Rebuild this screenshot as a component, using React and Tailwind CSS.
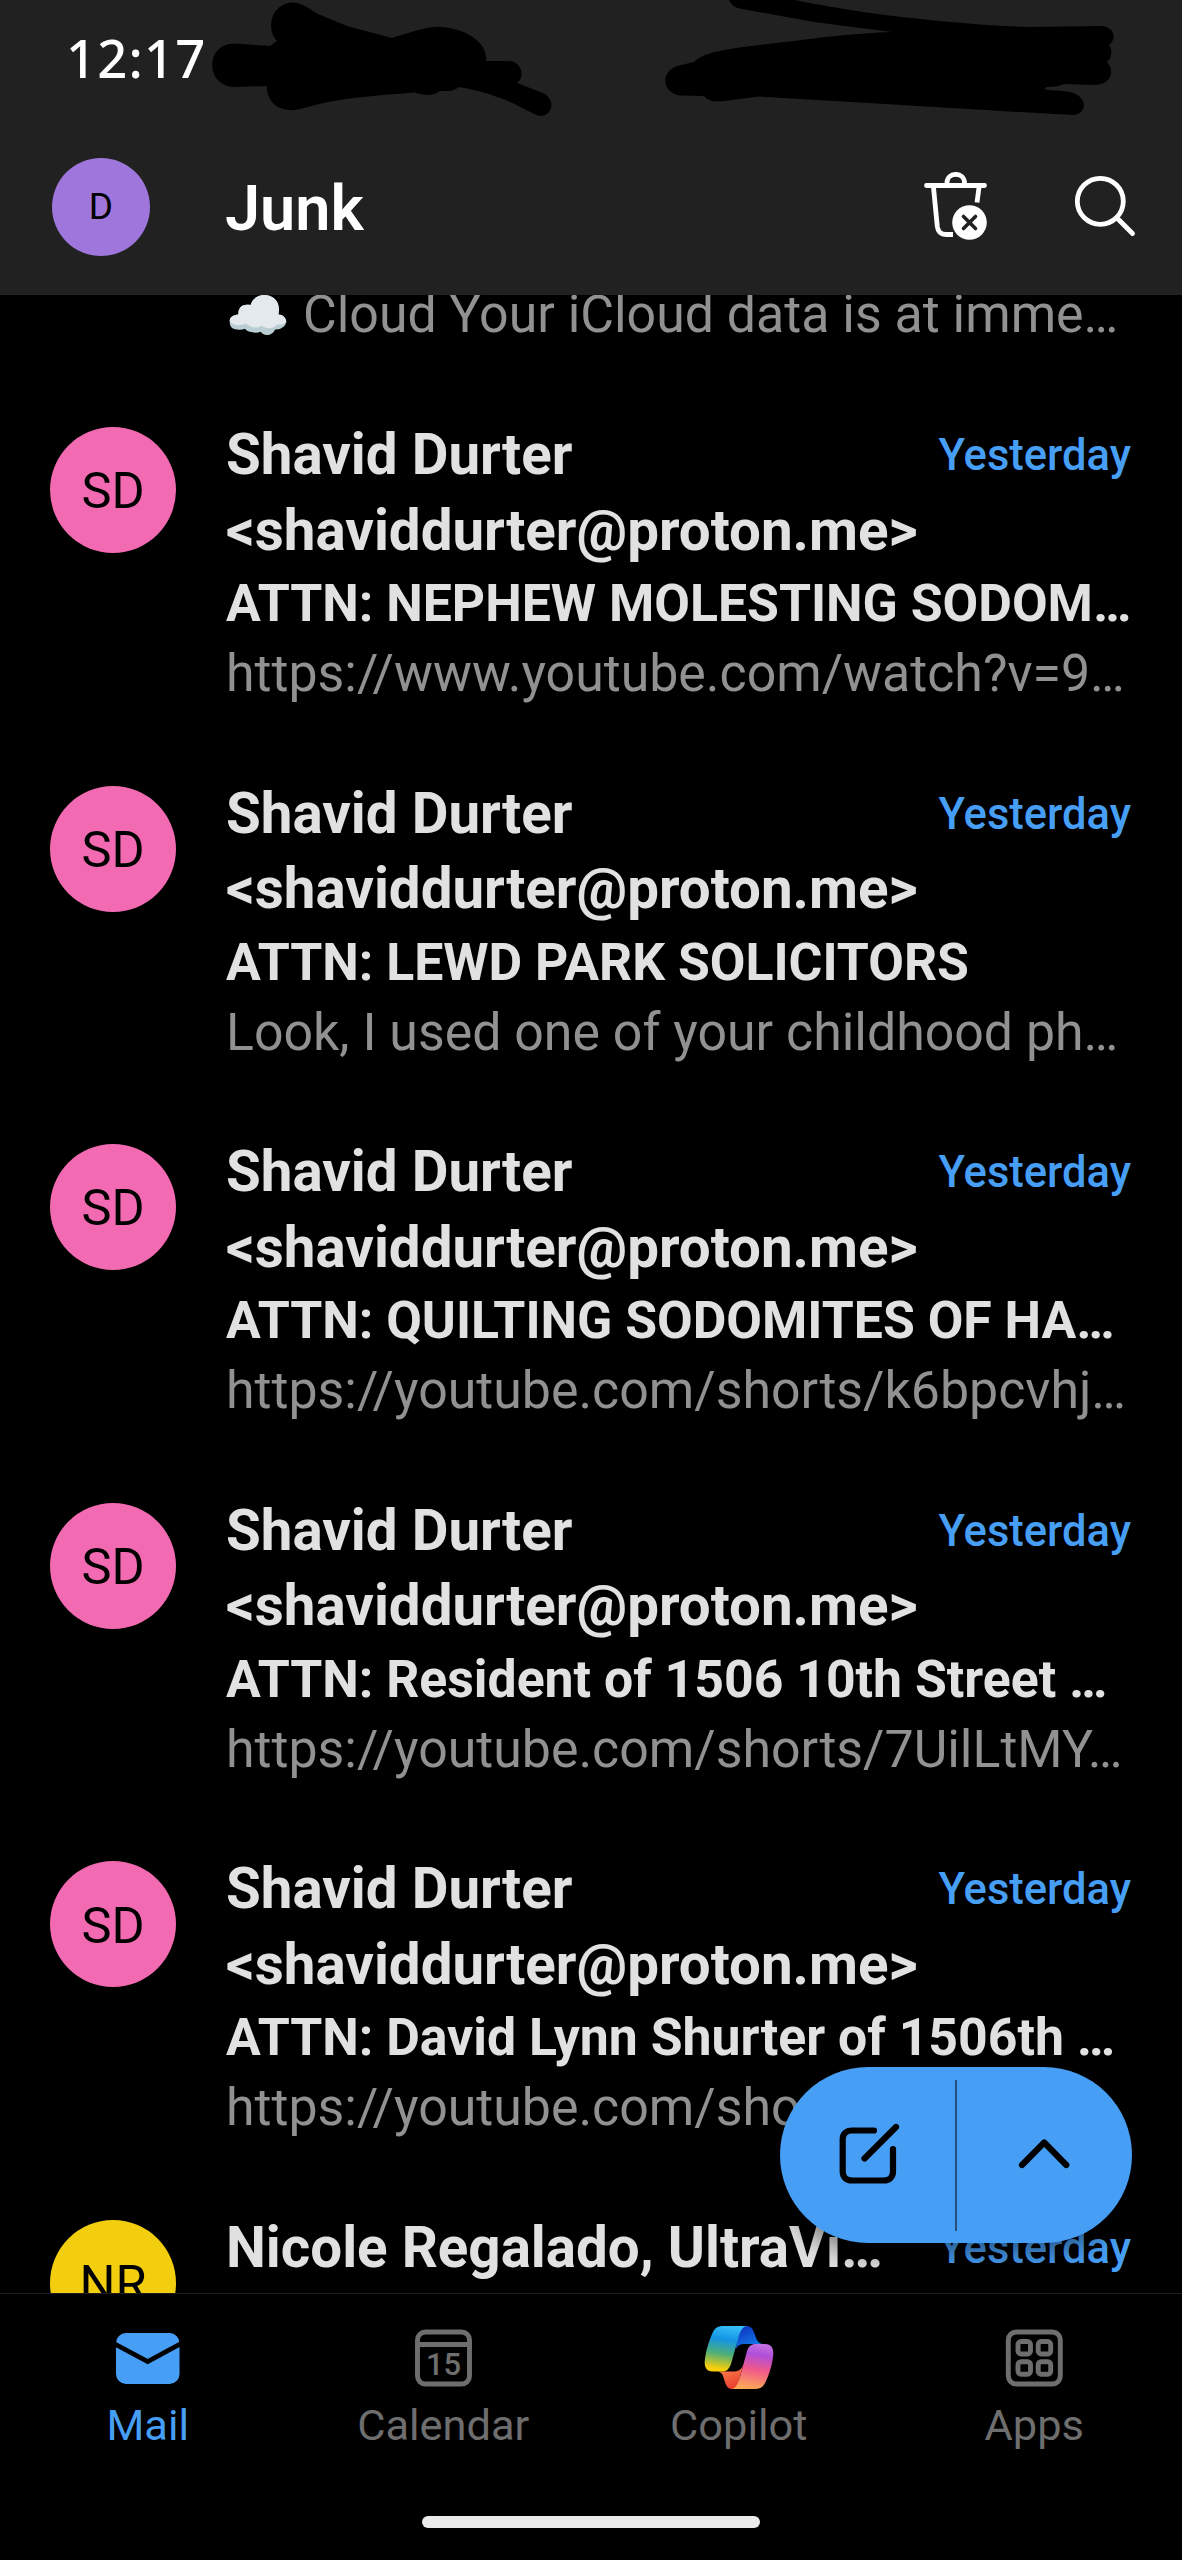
const rows = [
  { subject: "ATTN: NEPHEW MOLESTING SODOM…", preview: "https://www.youtube.com/watch?v=9…" },
  { subject: "ATTN: LEWD PARK SOLICITORS", preview: "Look, I used one of your childhood ph…" },
  { subject: "ATTN: QUILTING SODOMITES OF HA…", preview: "https://youtube.com/shorts/k6bpcvhj…" },
  { subject: "ATTN: Resident of 1506 10th Street …", preview: "https://youtube.com/shorts/7UilLtMY…" },
  { subject: "ATTN: David Lynn Shurter of 1506th …", preview: "https://youtube.com/shorts/k6bpcvhj…" },
];

function StatusBar() {
  return (
    <div className="relative flex h-[119px] items-start pl-[66px] pt-[23px]">
      <span className="font-['Noto_Sans',sans-serif] text-[52.500px] font-medium leading-[70px] tracking-[1.200px] text-white">12:17</span>
      <svg className="absolute left-0 top-0" width="1182" height="119" viewBox="0 0 1182 119">
        <path d="M234 43.5L270 46L277 41C266 30 270 5 291 2.5C301 2 308 8 318 14L347 26L392 38C415 31 430 26 442 27C467 29 488 43 486 61L510 61C521 62 526 76 517 83L543 93C557 100 552 117 539 116C530 113 515 103 500 98C485 92 470 89 459 87C452 92 447 91 440 91C433 96 425 96 415 92.5C385 95 350 97 323 103L300 109C280 114 266 102 267 86L234 87C205 86 205 44 234 43.5Z" />
        <path d="M729 0C732 6 736 8 742 9L814 22L892 32C860 33 815 38 794 41C760 45 725 48 708 54C700 57 697 59 694 62L677 66C660 72 662 93 680 95.5L704 96C709 102 716 102 725 101L758 96.5C850 102 950 108 1020 112L1073 115C1088 114 1088 96 1070 92C1060 90 1050 91 1044 89L1047 87C1055 87 1060 86 1064 84L1093 85C1112 85 1115 70 1107 62C1113 57 1112 49 1109 45C1118 38 1113 26 1101 26L1030 27C960 25 860 14 795 0Z" />
      </svg>
    </div>
  );
}

function TrashIcon() {
  return (
    <svg width="64" height="70" viewBox="923 173.500 64 70" fill="none" stroke="#fff" strokeWidth="4.8" strokeLinecap="round">
      <path d="M926.5 187H984.5M947 187V184.500C947 173 964.500 173 964.500 184.500V187" />
      <path d="M933.500 189L937.300 228C938 233.500 941 236 946 236H953" strokeLinecap="butt" />
      <path d="M979 189L977 204" strokeLinecap="butt" />
      <circle cx="969.500" cy="224" r="17.300" fill="#fff" stroke="none" />
      <path d="M963.500 218L975.500 230M975.500 218L963.500 230" stroke="#212121" strokeWidth="3.600" />
    </svg>
  );
}

function SearchIcon() {
  return (
    <svg width="64" height="64" viewBox="1073 174 64 64" fill="none" stroke="#fff" strokeWidth="4.800" strokeLinecap="round">
      <circle cx="1100.300" cy="200.300" r="23" />
      <path d="M1117.500 217.500L1132.500 232.500" />
    </svg>
  );
}

function Row({ subject, preview }) {
  return (
    <div className="flex h-[358.600px] shrink-0 pl-[50px] pr-[51px]">
      <div className="flex size-[126px] shrink-0 items-center justify-center rounded-full bg-[#f26ab2] pt-[2px] text-[50.500px] text-black">SD</div>
      <div className="ml-[50px] min-w-0 flex-1 whitespace-nowrap">
        <div className="-mt-[9px] flex justify-between text-[#e1e1e1]">
          <div className="text-[56.500px] font-bold leading-[75.500px]">
            Shavid Durter
            <br />
            &lt;shaviddurter@proton.me&gt;
          </div>
          <div className="-ml-[200px] text-[43.500px] font-medium leading-[75.500px] text-[#479ef5]">Yesterday</div>
        </div>
        <div className="text-[51.750px] font-bold leading-[70px] text-[#e1e1e1]">{subject}</div>
        <div className="text-[51.850px] leading-[70px] text-[#919191]">{preview}</div>
      </div>
    </div>
  );
}

function CloudIcon() {
  return (
    <svg className="mr-[16px] mt-[5px]" width="58" height="50" viewBox="229 284 58 50">
      <path d="M229.700 320C230 316 233 314 238.500 313.500C238 308 241 304.500 245 304C247 303.500 249 303.500 250.700 304C254 290 277 291 278.700 306C279 309 279 311 278.300 313.500C283 313.500 286 317 286.300 320.500C286 325 281 329 275 328.500C274 332 270 334 267 334C264 334 262 332.500 260.700 330.700C258 332 254 332 251.700 331C249 331 246 329.500 245 327.700C242 329 238 329 235 328.300C231 327 229.500 324 229.700 320Z" fill="#b9ced3" />
      <path d="M229.700 320C230 316 233 314 238.500 313.500C238 308 241 304.500 245 304C247 303.500 249 303.500 250.700 304C254 290 277 291 278.700 306C279 309 279 311 278.300 313.500C283 313.500 286 317 286.300 320.500C284 323.500 281 324 277 323.500C275 327.500 266 329 261.700 324.500C258 327.500 251 327.500 246 322.500C241 325 233 325 229.700 320Z" fill="#e4e9ed" />
    </svg>
  );
}

function MailIcon() {
  return (
    <svg width="64" height="64" viewBox="116 2325 64 64">
      <rect x="116" y="2332" width="63.500" height="51" rx="10" fill="#479ef5" />
      <path d="M114 2342.500L147.700 2360.500L181 2342.500" fill="none" stroke="#000" strokeWidth="4.700" />
    </svg>
  );
}

function CalendarIcon() {
  return (
    <svg width="64" height="64" viewBox="411 2325.500 64 64" fill="none" stroke="#6e6e6e" strokeWidth="4.900">
      <rect x="417.500" y="2331.500" width="52" height="52" rx="8" />
      <path d="M417 2344H470" />
      <text x="443.500" y="2374.500" textAnchor="middle" fontSize="31" fontWeight="500" fill="#6e6e6e" stroke="none">15</text>
    </svg>
  );
}

function CopilotIcon() {
  return (
    <svg width="72" height="66" viewBox="0 0 72 66">
      <defs>
        <linearGradient id="cpA" x1="0.550" y1="0" x2="0.400" y2="1">
          <stop offset="0" stopColor="#35bdf8" />
          <stop offset="0.300" stopColor="#1495e4" />
          <stop offset="0.620" stopColor="#4fae77" />
          <stop offset="0.950" stopColor="#f7cf0b" />
        </linearGradient>
        <linearGradient id="cpB" x1="0.550" y1="0" x2="0.400" y2="1">
          <stop offset="0" stopColor="#c46fe4" />
          <stop offset="0.220" stopColor="#b04fd8" />
          <stop offset="0.550" stopColor="#f0588c" />
          <stop offset="1" stopColor="#ffab55" />
        </linearGradient>
        <linearGradient id="cpC" x1="0.300" y1="0" x2="0.800" y2="1">
          <stop offset="0" stopColor="#0d35c1" />
          <stop offset="1" stopColor="#1484ee" />
        </linearGradient>
        <linearGradient id="cpD" x1="0.200" y1="0" x2="0.700" y2="1">
          <stop offset="0" stopColor="#ff8b4c" />
          <stop offset="1" stopColor="#e6392f" />
        </linearGradient>
      </defs>
      <path d="M35 1H43C51 1 51 9 54 15C56 18 58 19 60 19H43C37 19 35 20 33 24Z" fill="url(#cpC)" />
      <path d="M14 46.500C19 47 20 50 21 54C23 60 24 64 29 64H34L40 40C38 45 35 46.500 30 46.500Z" fill="url(#cpD)" />
      <path d="M20 1H45C39 1 37 7 35 14L28 39C26 44 24 46.500 19 46.500H10C2 46.500 1 40 2 34C3 25 7 13 10 7C12 3 15 1 20 1Z" fill="url(#cpA)" />
      <path d="M53 19H62C70 19 71 26 70 32C69 41 65 53 62 58C60 62 57 64 52 64H28C33 64 35 58 37 52L44 26C46 21 48 19 53 19Z" fill="url(#cpB)" />
    </svg>
  );
}

function AppsIcon() {
  return (
    <svg width="64" height="64" viewBox="1002 2325.500 64 64" fill="none" stroke="#6e6e6e" strokeWidth="4.900">
      <rect x="1008.300" y="2331.500" width="52" height="52" rx="8" />
      <rect x="1018" y="2341" width="12.500" height="12.500" rx="3" />
      <rect x="1038.200" y="2341" width="12.500" height="12.500" rx="3" />
      <rect x="1018" y="2361.200" width="12.500" height="12.500" rx="3" />
      <rect x="1038.200" y="2361.200" width="12.500" height="12.500" rx="3" />
    </svg>
  );
}

function Tab({ icon, label, active }) {
  return (
    <div className={active ? "flex flex-1 flex-col items-center text-[#479ef5]" : "flex flex-1 flex-col items-center text-[#6e6e6e]"}>
      <div className="flex h-[68px] items-center justify-center">{icon}</div>
      <span className="mt-[4px] text-[43.400px] leading-[60px]">{label}</span>
    </div>
  );
}

export default function App() {
  return (
    <div className="relative flex h-[2560px] w-[1182px] flex-col overflow-hidden bg-black font-[Roboto,sans-serif]">
      <header className="h-[294.500px] shrink-0 bg-[#212121]">
        <StatusBar />
        <div className="flex h-[175px] items-center pl-[52px] pr-[45px]">
          <div className="flex size-[98px] items-center justify-center rounded-full bg-[#9f76dc] text-[37px] text-black">D</div>
          <h1 className="ml-[75px] flex-1 pt-[5px] text-[63px] font-semibold leading-[70px] text-white">Junk</h1>
          <TrashIcon />
          <div className="ml-[86px]">
            <SearchIcon />
          </div>
        </div>
      </header>

      <main className="flex h-[1998px] shrink-0 flex-col overflow-hidden">
        <div className="-mt-[15px] flex h-[147.500px] shrink-0 items-start whitespace-nowrap pl-[229px]">
          <CloudIcon />
          <span className="text-[51.850px] leading-[70px] text-[#919191]">Cloud Your iCloud data is at imme…</span>
        </div>
        {rows.map((row, i) => (
          <Row key={i} {...row} />
        ))}
        <div className="flex shrink-0 pl-[50px] pr-[51px]">
          <div className="flex size-[126px] shrink-0 items-center justify-center rounded-full bg-[#f2ce0e] pt-[2px] text-[50.500px] text-black">NR</div>
          <div className="-mt-[9px] ml-[50px] flex flex-1 justify-between whitespace-nowrap">
            <span className="text-[56.500px] font-bold leading-[75.500px] text-[#e1e1e1]">Nicole Regalado, UltraVi…</span>
            <span className="text-[43.500px] font-medium leading-[75.500px] text-[#479ef5]">Yesterday</span>
          </div>
        </div>
      </main>

      <nav className="flex flex-1 flex-col border-t-[1.500px] border-[#1f1f1f]">
        <div className="flex pt-[30px]">
          <Tab icon={<MailIcon />} label="Mail" active />
          <Tab icon={<CalendarIcon />} label="Calendar" />
          <Tab icon={<CopilotIcon />} label="Copilot" />
          <Tab icon={<AppsIcon />} label="Apps" />
        </div>
        <div className="mx-auto mb-[32px] mt-auto h-[12px] w-[338px] rounded-full bg-[#ebebeb]" />
      </nav>

      <div className="absolute left-[780px] top-[2067px] flex h-[176px] w-[352px] items-center rounded-full bg-[#479ef5] shadow-[0_10px_24px_rgba(0,0,0,0.45)]">
        <div className="flex w-[175px] justify-center">
          <svg width="64" height="64" viewBox="836 2123 64 64" fill="none" stroke="#000" strokeWidth="6.200" strokeLinecap="round">
            <path d="M874 2130.500H852C846 2130.500 842.700 2134 842.700 2139.500V2171.500C842.700 2177 846 2180.500 852 2180.500H884C889.500 2180.500 893 2177 893 2171.500V2149" />
            <path d="M896 2127L866 2157L864.500 2158.500" />
          </svg>
        </div>
        <div className="h-[151px] w-[1.500px] bg-[#24507b]" />
        <div className="flex flex-1 justify-center">
          <svg width="64" height="64" viewBox="1012 2123 64 64" fill="none" stroke="#000" strokeWidth="6.200" strokeLinecap="round" strokeLinejoin="round">
            <path d="M1022 2165L1044.200 2142.500L1066.300 2165" />
          </svg>
        </div>
      </div>
    </div>
  );
}
